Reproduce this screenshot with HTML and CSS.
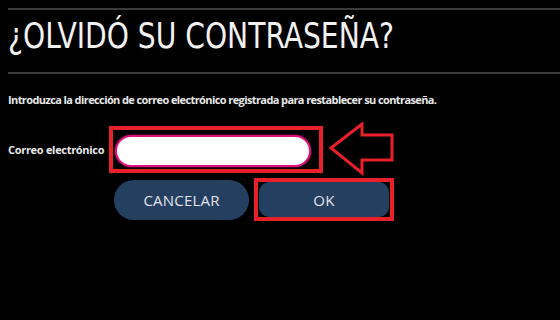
FILE: index.html
```html
<!DOCTYPE html>
<html lang="es">
<head>
    <meta charset="utf-8">
    <title>¿Olvidó su contraseña?</title>
    <link rel="stylesheet" href="styles.css">
</head>
<body>
<div id="container">
    <div class="header">
        <h1 class="title">¿OLVIDÓ SU CONTRASEÑA?</h1>
    </div>
    <p class="intro">Introduzca la dirección de correo electrónico registrada para restablecer su contraseña.</p>
    <form name="recover" class="form">
        <div class="row">
            <label for="email" class="label">Correo electrónico</label>
            <span class="mark mark-input">
                <input type="text" id="email" name="email" class="text">
            </span>
            <svg class="arrow" width="66" height="54" viewBox="0 0 66 54">
                <polygon points="2,26 33,2 33,13 63,13 63,38 33,38 33,51" fill="none" stroke="#e8202a" stroke-width="3" stroke-linejoin="miter"/>
            </svg>
        </div>
        <div class="buttons">
            <input type="button" value="CANCELAR" class="button cancel">
            <span class="mark mark-ok">
                <input type="button" value="OK" class="button ok">
            </span>
        </div>
    </form>
</div>
</body>
</html>
```

FILE: styles.css
```css
* {
    margin: 0;
    padding: 0;
    box-sizing: border-box;
}

html, body {
    background: #000;
}

body {
    width: 560px;
    height: 320px;
    overflow: hidden;
    font-family: "Open Sans", "Liberation Sans", sans-serif;
    color: #e8e8e8;
}

#container {
    padding: 8px 0 0 8px;
}

.header {
    border-top: 2px solid #3b3b3b;
    border-bottom: 2px solid #3b3b3b;
    height: 66px;
}

.title {
    font-family: "DejaVu Sans", sans-serif;
    font-stretch: condensed;
    font-weight: normal;
    font-size: 36px;
    line-height: 40px;
    color: #f2f2f2;
    padding-top: 6px;
    white-space: nowrap;
    transform: scaleX(0.87);
    transform-origin: left center;
}

.intro {
    font-size: 11px;
    font-weight: 700;
    letter-spacing: -0.6px;
    margin-top: 19px;
    line-height: 14px;
}

.row {
    display: flex;
    align-items: center;
    margin-top: 15px;
}

.label {
    width: 101px;
    font-size: 11px;
    font-weight: 700;
    letter-spacing: -0.3px;
    white-space: nowrap;
}

.mark {
    display: inline-block;
    border: 4px solid #e8202a;
}

.mark-input {
    padding: 5px 8px 2px 2px;
}

.text {
    display: block;
    width: 196px;
    height: 32px;
    border: 2px solid #e0107a;
    border-radius: 16px;
    background: #fff;
    box-shadow: 0 0 2px #e0107a;
}

.arrow {
    margin-left: 6px;
}

.buttons {
    display: flex;
    align-items: center;
    margin: 2px 0 0 106px;
}

.button {
    font-family: "Open Sans", "Liberation Sans", sans-serif;
    font-size: 15px;
    font-weight: 500;
    letter-spacing: 0.2px;
    color: #e0e4ea;
    background: #243f60;
    border: none;
}

.cancel {
    width: 135px;
    height: 40px;
    border-radius: 20px;
}

.mark-ok {
    margin-left: 5px;
    padding: 0 1px;
}

.ok {
    display: block;
    width: 130px;
    height: 35px;
    border-radius: 10px;
}
```
